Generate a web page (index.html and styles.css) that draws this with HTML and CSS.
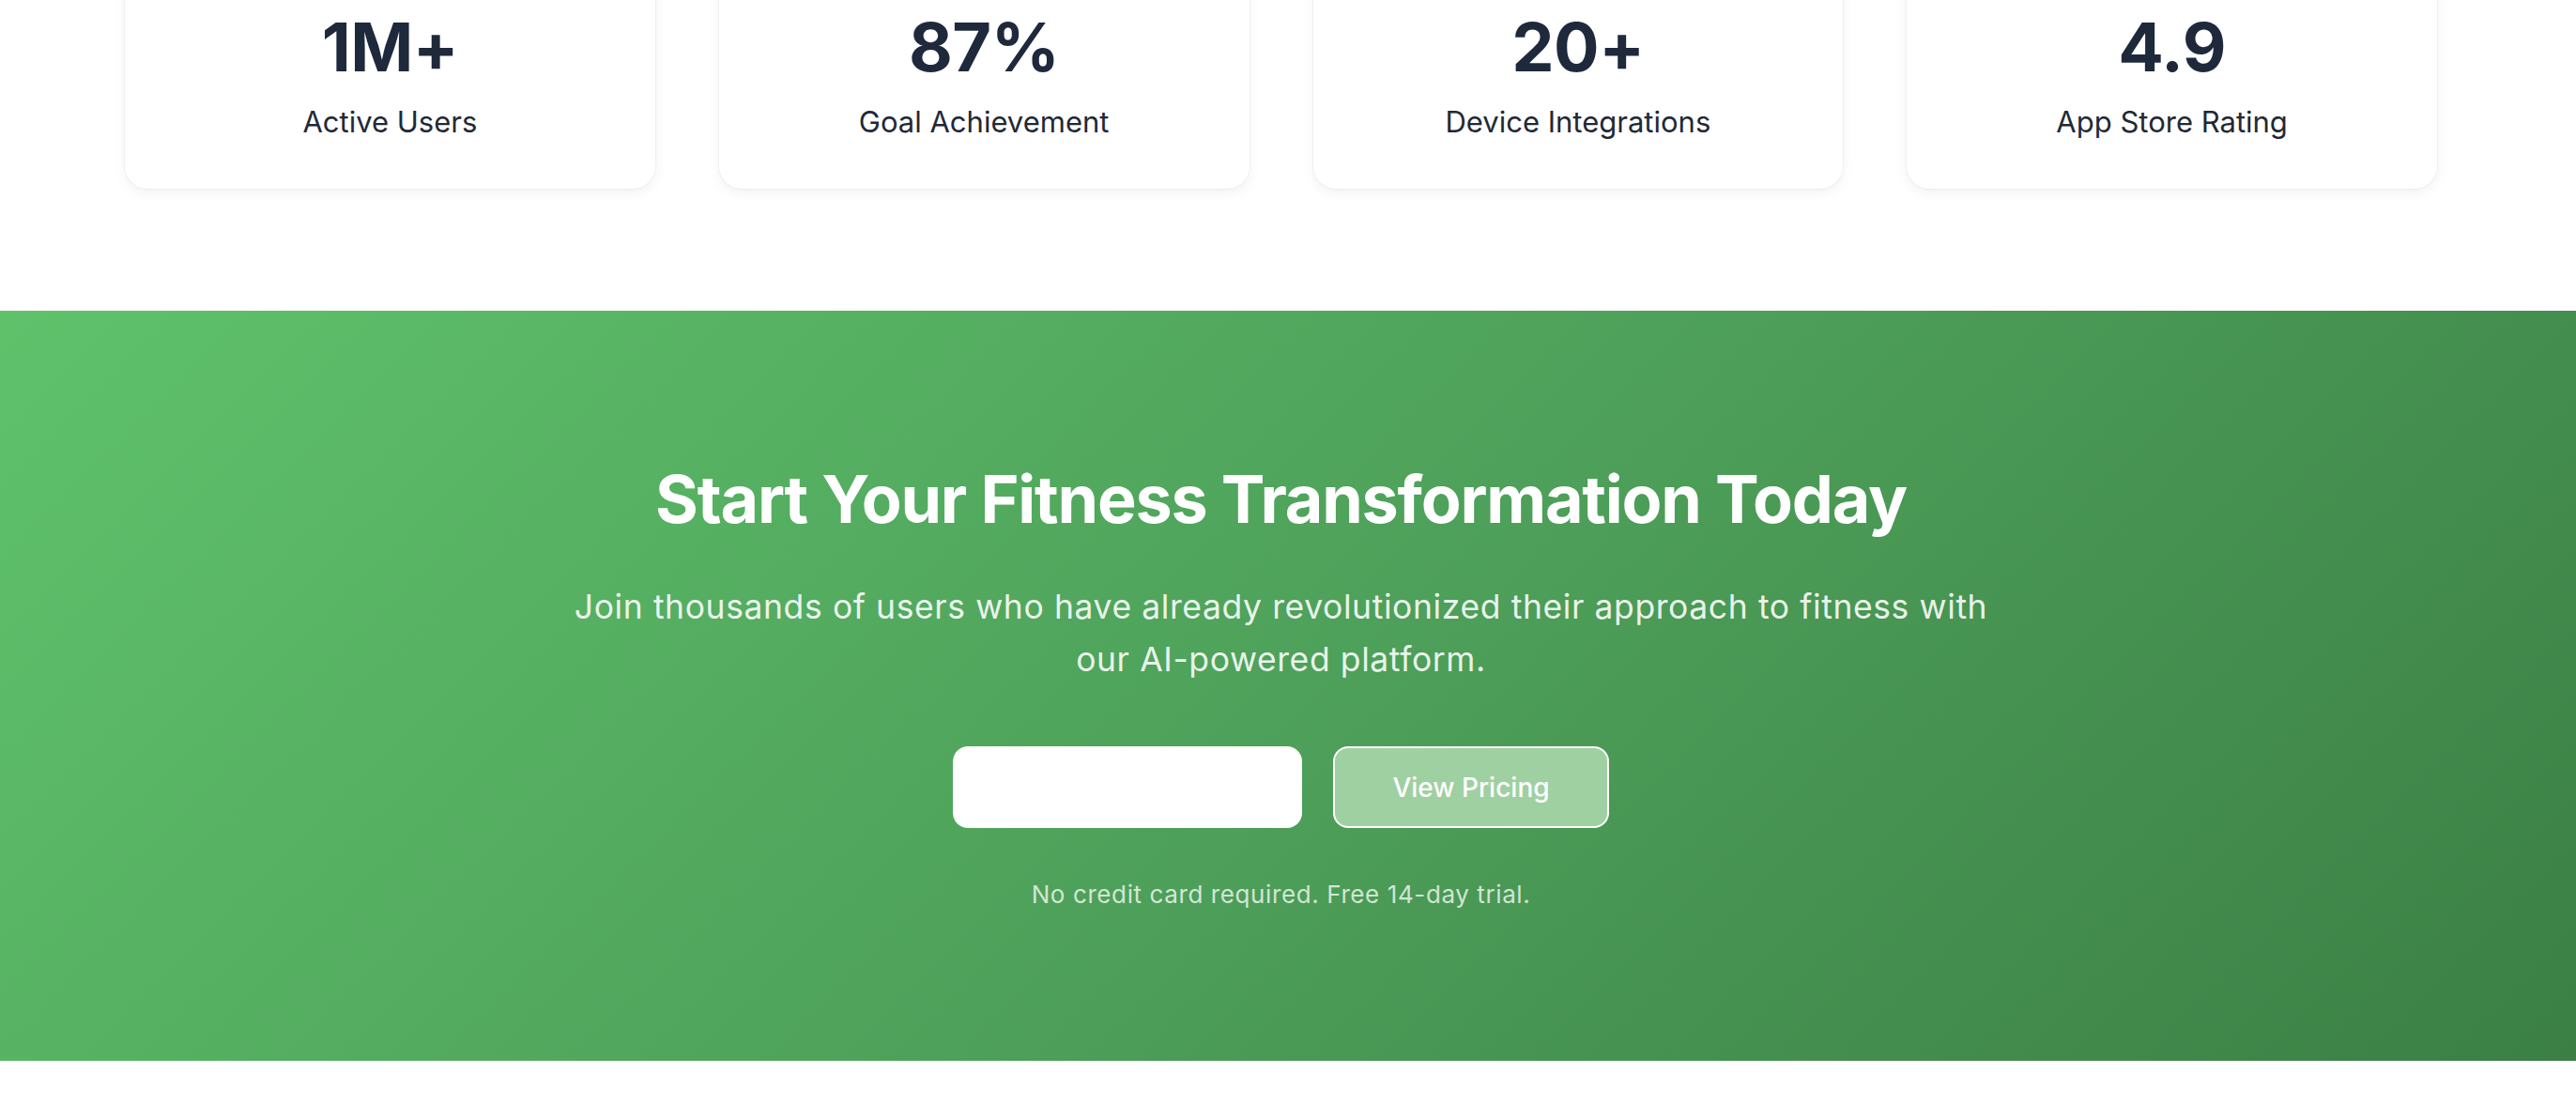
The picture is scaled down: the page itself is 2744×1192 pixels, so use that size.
FILE: index.html
```html
<!DOCTYPE html>
<html lang="en">
<head>
<meta charset="utf-8">
<title>Fitness</title>
<link rel="stylesheet" href="styles.css">
</head>
<body>
<section class="stats">
  <div class="stats-grid">
    <div class="stat-card">
      <div class="stat-number">1M+</div>
      <div class="stat-label">Active Users</div>
    </div>
    <div class="stat-card">
      <div class="stat-number">87%</div>
      <div class="stat-label">Goal Achievement</div>
    </div>
    <div class="stat-card">
      <div class="stat-number">20+</div>
      <div class="stat-label">Device Integrations</div>
    </div>
    <div class="stat-card">
      <div class="stat-number">4.9</div>
      <div class="stat-label">App Store Rating</div>
    </div>
  </div>
</section>
<section class="cta">
  <div class="cta-inner">
    <h2 class="cta-title">Start Your Fitness Transformation Today</h2>
    <p class="cta-text">Join thousands of users who have already revolutionized their approach to fitness with our AI-powered platform.</p>
    <div class="cta-actions">
      <input class="cta-input" type="text" aria-label="Email">
      <button class="cta-button" type="button">View Pricing</button>
    </div>
    <p class="cta-note">No credit card required. Free 14-day trial.</p>
  </div>
</section>
<div class="after"></div>
</body>
</html>
```
FILE: styles.css
```css
* { box-sizing: border-box; }
html, body { margin: 0; padding: 0; background: #ffffff; }
body {
  font-family: "Inter", "Noto Sans", sans-serif;
  color: #1f2937;
  overflow: hidden;
}
.stats {
  width: calc(100% - 15px);
  margin-top: -40px;
  padding: 0 133px;
}
.stats-grid {
  display: grid;
  grid-template-columns: repeat(4, 1fr);
  gap: 68px;
}
.stat-card {
  background: #ffffff;
  border-radius: 24px;
  box-shadow: 0 4px 14px rgba(15, 23, 42, 0.06), 0 0 0 1px rgba(15, 23, 42, 0.035);
  padding: 47px 20px 48px;
  text-align: center;
}
.stat-number {
  font-size: 72px;
  line-height: 86px;
  font-weight: 700;
  color: #1e293b;
  letter-spacing: -0.5px;
}
.stat-label {
  margin-top: 13px;
  font-size: 31px;
  line-height: 47px;
  color: #1f2937;
}
.cta {
  margin-top: 130px;
  background: linear-gradient(135deg, #5fc26b 0%, #4ea15a 50%, #3b7f45 100%);
}
.cta-inner {
  width: calc(100% - 15px);
  padding: 159px 0 159px;
  display: flex;
  flex-direction: column;
  align-items: center;
  text-align: center;
}
.cta-title {
  margin: 0;
  font-size: 70px;
  line-height: 84px;
  font-weight: 700;
  color: #ffffff;
  letter-spacing: -1.2px;
}
.cta-text {
  margin: 45px 0 0;
  max-width: 1540px;
  font-size: 35.5px;
  line-height: 56px;
  letter-spacing: 0.6px;
  color: rgba(255, 255, 255, 0.9);
}
.cta-actions {
  margin-top: 64px;
  display: flex;
  gap: 33px;
}
.cta-input {
  width: 372px;
  height: 87px;
  border: none;
  border-radius: 16px;
  background: #ffffff;
  outline: none;
  font: inherit;
  padding: 0 24px;
}
.cta-button {
  width: 294px;
  height: 87px;
  border: 2px solid #ffffff;
  border-radius: 16px;
  background: #9fd0a1;
  color: #ffffff;
  font-family: inherit;
  font-size: 28px;
  font-weight: 500;
}
.cta-note {
  margin: 52px 0 0;
  font-size: 26px;
  line-height: 37px;
  letter-spacing: 0.6px;
  color: rgba(255, 255, 255, 0.75);
}
.after {
  height: 100px;
}
```
